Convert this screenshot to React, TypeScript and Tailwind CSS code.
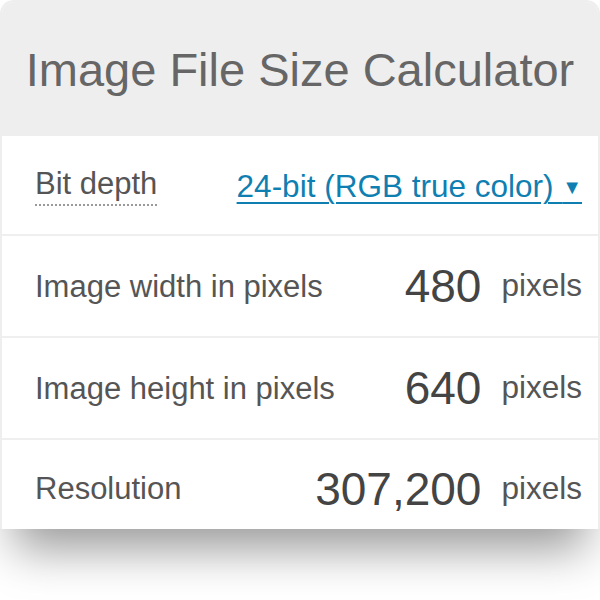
export default function App() {
  const rows = [
    { label: "Image width in pixels", value: "480" },
    { label: "Image height in pixels", value: "640" },
  ];

  return (
    <div className="h-[600px] w-[600px] overflow-hidden bg-white font-[family-name:Liberation_Sans,Arial,sans-serif]">
      <div className="w-[600px] rounded-t-[14px] border-x-2 border-t-2 border-[#eeeeee] bg-white shadow-[0_34px_44px_-14px_rgba(0,0,0,0.4)]">
        <div className="flex h-[134px] items-center justify-center rounded-t-[12px] bg-[#eeeeee]">
          <h1 className="text-[47px] leading-none text-[#666666]">Image File Size Calculator</h1>
        </div>

        <div className="flex h-[100px] items-center justify-between border-b-2 border-[#efefef] pl-[33px] pr-[16px] pt-[4px]">
          <span className="border-b-2 border-dotted border-[#999999] pb-[5px] text-[31px] leading-none text-[#555555]">
            Bit depth
          </span>
          <span className="text-[31.5px] leading-none text-[#0f7fb2] underline decoration-2 underline-offset-[5px]">
            24-bit (RGB true color)&nbsp;<span className="text-[20px] align-[3px]">▼</span>
          </span>
        </div>

        {rows.map((row) => (
          <div
            key={row.label}
            className="flex h-[102px] items-center border-b-2 border-[#efefef] pl-[33px] pr-[16px]"
          >
            <span className="flex-1 text-[31px] leading-none text-[#555555]">{row.label}</span>
            <span className="text-[46px] leading-none text-[#444444]">{row.value}</span>
            <span className="ml-[20px] text-[31.5px] leading-none text-[#555555]">pixels</span>
          </div>
        ))}

        <div className="flex h-[89px] items-center pl-[33px] pr-[16px] pt-[8px]">
          <span className="flex-1 text-[31px] leading-none text-[#555555]">Resolution</span>
          <span className="text-[46px] leading-none text-[#444444]">307,200</span>
          <span className="ml-[20px] text-[31.5px] leading-none text-[#555555]">pixels</span>
        </div>
      </div>
    </div>
  );
}
